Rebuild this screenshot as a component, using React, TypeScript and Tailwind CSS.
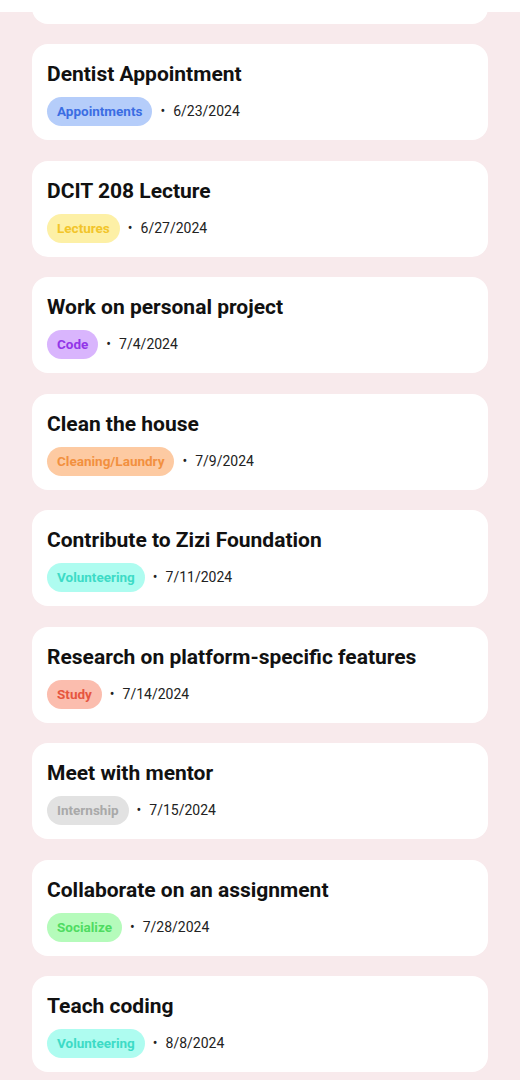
import React from 'react';

type Task = {
  title: string;
  category: string;
  date: string;
};

const badgeStyles: Record<string, string> = {
  Appointments: 'bg-[#b5cdfa] text-[#3b6de3]',
  Lectures: 'bg-[#fdf0a6] text-[#f2c52a]',
  Code: 'bg-[#d9b5fd] text-[#9236e8]',
  'Cleaning/Laundry': 'bg-[#fdcaa2] text-[#f2903f]',
  Volunteering: 'bg-[#aefcf0] text-[#3ddbc6]',
  Study: 'bg-[#fbbdae] text-[#e6563f]',
  Internship: 'bg-[#e2e2e2] text-[#a9a9a9]',
  Socialize: 'bg-[#b5fbbb] text-[#4fdc62]',
};

const tasks: Task[] = [
  { title: 'Dentist Appointment', category: 'Appointments', date: '6/23/2024' },
  { title: 'DCIT 208 Lecture', category: 'Lectures', date: '6/27/2024' },
  { title: 'Work on personal project', category: 'Code', date: '7/4/2024' },
  { title: 'Clean the house', category: 'Cleaning/Laundry', date: '7/9/2024' },
  { title: 'Contribute to Zizi Foundation', category: 'Volunteering', date: '7/11/2024' },
  { title: 'Research on platform-specific features', category: 'Study', date: '7/14/2024' },
  { title: 'Meet with mentor', category: 'Internship', date: '7/15/2024' },
  { title: 'Collaborate on an assignment', category: 'Socialize', date: '7/28/2024' },
  { title: 'Teach coding', category: 'Volunteering', date: '8/8/2024' },
];

function TaskCard({ task }: { task: Task }) {
  return (
    <div className="h-[96px] bg-white rounded-[16px] px-[15px] pt-[16px]">
      <h2 className="text-[21px] leading-[28px] font-bold text-[#111]">{task.title}</h2>
      <div className="flex items-center gap-[8px] mt-[9px] text-[14px] leading-[17px] text-[#222]">
        <span
          className={`rounded-full px-[10px] py-[6px] text-[13.5px] font-bold ${badgeStyles[task.category]}`}
        >
          {task.category}
        </span>
        <span>•</span>
        <span>{task.date}</span>
      </div>
    </div>
  );
}

export default function App() {
  return (
    <div
      className="relative min-h-screen h-[1080px] overflow-hidden bg-[#f8eaec]"
      style={{ fontFamily: 'Roboto, "Noto Sans", sans-serif' }}
    >
      <div className="absolute top-0 left-0 right-0 h-[12px] bg-white" />
      <div className="flex flex-col gap-[20.5px] px-[32px] mt-[-72.5px]">
        <div className="relative h-[96px] bg-white rounded-[16px]" />
        {tasks.map((task, index) => (
          <TaskCard key={index} task={task} />
        ))}
      </div>
    </div>
  );
}
